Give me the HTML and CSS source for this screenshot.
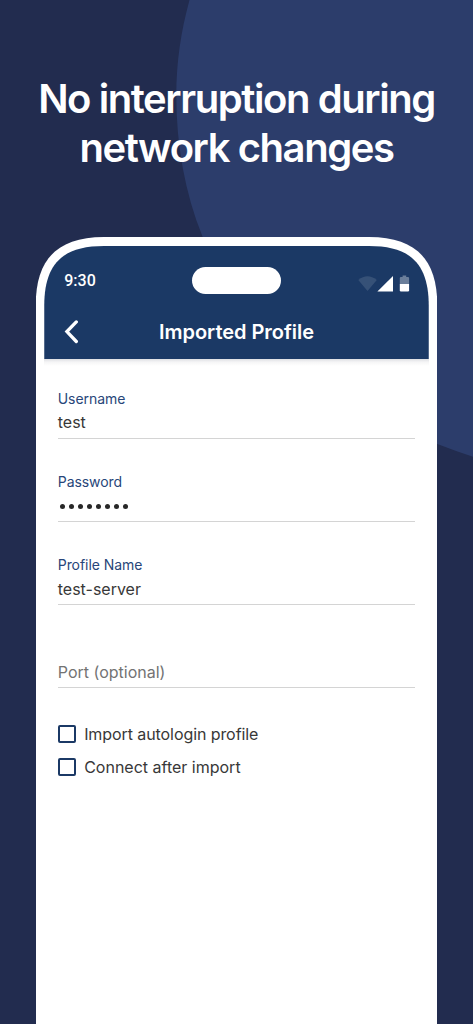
FILE: index.html
```
<!DOCTYPE html>
<html lang="en">
<head>
<meta charset="utf-8">
<title>No interruption during network changes</title>
<link rel="stylesheet" href="styles.css">
</head>
<body>
<main class="poster">
  <svg class="backdrop" viewBox="0 0 473 1024" aria-hidden="true"><path d="M189.5 0C181 31 176.3 62 176.3 96C176.3 145 185 193 202.3 236C243 338 326 407 438 444.3Q455 451 473 456.7V0Z" fill="#2c3d6b"/></svg>
  <h1 class="headline">No interruption during<br>network changes</h1>
  <section class="phone">
    <header class="topbar">
      <div class="status">
        <span class="clock">9:30</span>
        <span class="island"></span>
        <svg class="indicators" width="52" height="17" viewBox="0 0 52 17" aria-hidden="true">
          <path d="M.3 4.9Q9.4-2.6 18.8 4.9L9.5 16Z" fill="#fff" opacity=".12"/>
          <path d="M35 .9V16.5H19.4Z" fill="#fff"/>
          <path d="M44.6.4h3.6v1.5h1.7q1.2 0 1.2 1.2V9h-9.3V3.1q0-1.2 1.2-1.2h1.6Z" fill="#fff" opacity=".35"/>
          <path d="M41.8 9h9.3v6.3q0 1.2-1.2 1.2H43q-1.2 0-1.2-1.2Z" fill="#fff"/>
        </svg>
      </div>
      <div class="titlebar">
        <svg class="back" width="16" height="24" viewBox="0 0 16 24" aria-hidden="true"><path d="M12.3 1.9 2.9 11.6 12.3 21.5" fill="none" stroke="#fff" stroke-width="3.3" stroke-linecap="round" stroke-linejoin="miter"/></svg>
        <h2 class="title">Imported Profile</h2>
      </div>
    </header>
    <form class="form">
      <div class="field"><label class="label">Username</label><div class="value raised">test</div></div>
      <div class="field"><label class="label">Password</label><div class="value dots"><i></i><i></i><i></i><i></i><i></i><i></i><i></i><i></i></div></div>
      <div class="field"><label class="label">Profile Name</label><div class="value">test-server</div></div>
      <div class="field"><label class="label"></label><div class="value placeholder">Port (optional)</div></div>
      <div class="options">
        <div class="option"><span class="box"></span><span class="text">Import autologin profile</span></div>
        <div class="option"><span class="box"></span><span class="text connect">Connect after import</span></div>
      </div>
    </form>
  </section>
</main>
</body>
</html>
```
FILE: styles.css
```
* { box-sizing: border-box; }
body { margin: 0; font-family: Inter, "Liberation Sans", sans-serif; }
.poster { position: relative; isolation: isolate; width: 473px; height: 1024px; overflow: hidden; background: #222c4f; display: flex; flex-direction: column; align-items: center; }
.backdrop { position: absolute; inset: 0; z-index: -1; width: 473px; height: 1024px; }
.headline { margin: 74px 0 0; height: 163px; text-align: center; color: #fff; font-size: 40px; line-height: 49px; font-weight: 600; letter-spacing: -1.42px; white-space: nowrap; }
.phone { width: 401.5px; height: 787px; flex: none; padding: 9px 8.5px 0; background: #fff; clip-path: path("M0 787V68C0 22 22 0 68 0H333.5C379.5 0 401.5 22 401.5 68V787Z"); }
.topbar { height: 113px; color: #fff; background: #1b3965; clip-path: path("M0 113V60C0 18 18 0 60 0H324.5C366.5 0 384.5 18 384.5 60V113Z"); }
.status { height: 69px; padding: 0 19px 0 20px; display: grid; grid-template-columns: 1fr 89px 1fr; align-items: center; }
.clock { font: 500 16px/20px Roboto, sans-serif; letter-spacing: 0; margin-top: 1px; }
.island { margin-left: -.5px; width: 89px; height: 27px; border-radius: 14px; background: #fff; }
.indicators { justify-self: end; margin-top: 5px; }
.titlebar { height: 44px; padding: 0 20px; display: grid; grid-template-columns: 16px 1fr 16px; align-items: start; }
.back { margin-top: 5px; }
.title { margin: 5px 0 0; text-align: center; font-size: 20px; line-height: 24px; font-weight: 600; letter-spacing: -.04px; white-space: nowrap; }
.form { padding: 31px 13.5px 0; background: linear-gradient(#dedfe3, #f5f5f6 3px, #fff 7px); }
.field { height: 83px; }
.label { display: block; height: 18px; font-size: 14px; line-height: 18px; letter-spacing: -.06px; color: #284679; }
.value { height: 31px; border-bottom: 1px solid #d4d4d4; font-size: 16px; line-height: 30px; color: #383838; }
.raised { line-height: 29px; }
.placeholder { color: #737373; }
.dots { display: flex; align-items: center; gap: 4px; padding: 0 0 0 2.2px; }
.dots i { width: 5px; height: 5px; border-radius: 50%; background: #282828; }
.options { display: flex; flex-direction: column; gap: 14px; padding-top: 2px; }
.option { height: 19px; display: flex; align-items: center; gap: 8.4px; font-size: 16px; line-height: 19px; letter-spacing: -.08px; color: #383838; }
.text { padding-top: 2px; }
.connect { padding-top: 1px; letter-spacing: 0; }
.box { width: 18px; height: 18px; border: 2px solid #1b3965; border-radius: 2px; }
```
